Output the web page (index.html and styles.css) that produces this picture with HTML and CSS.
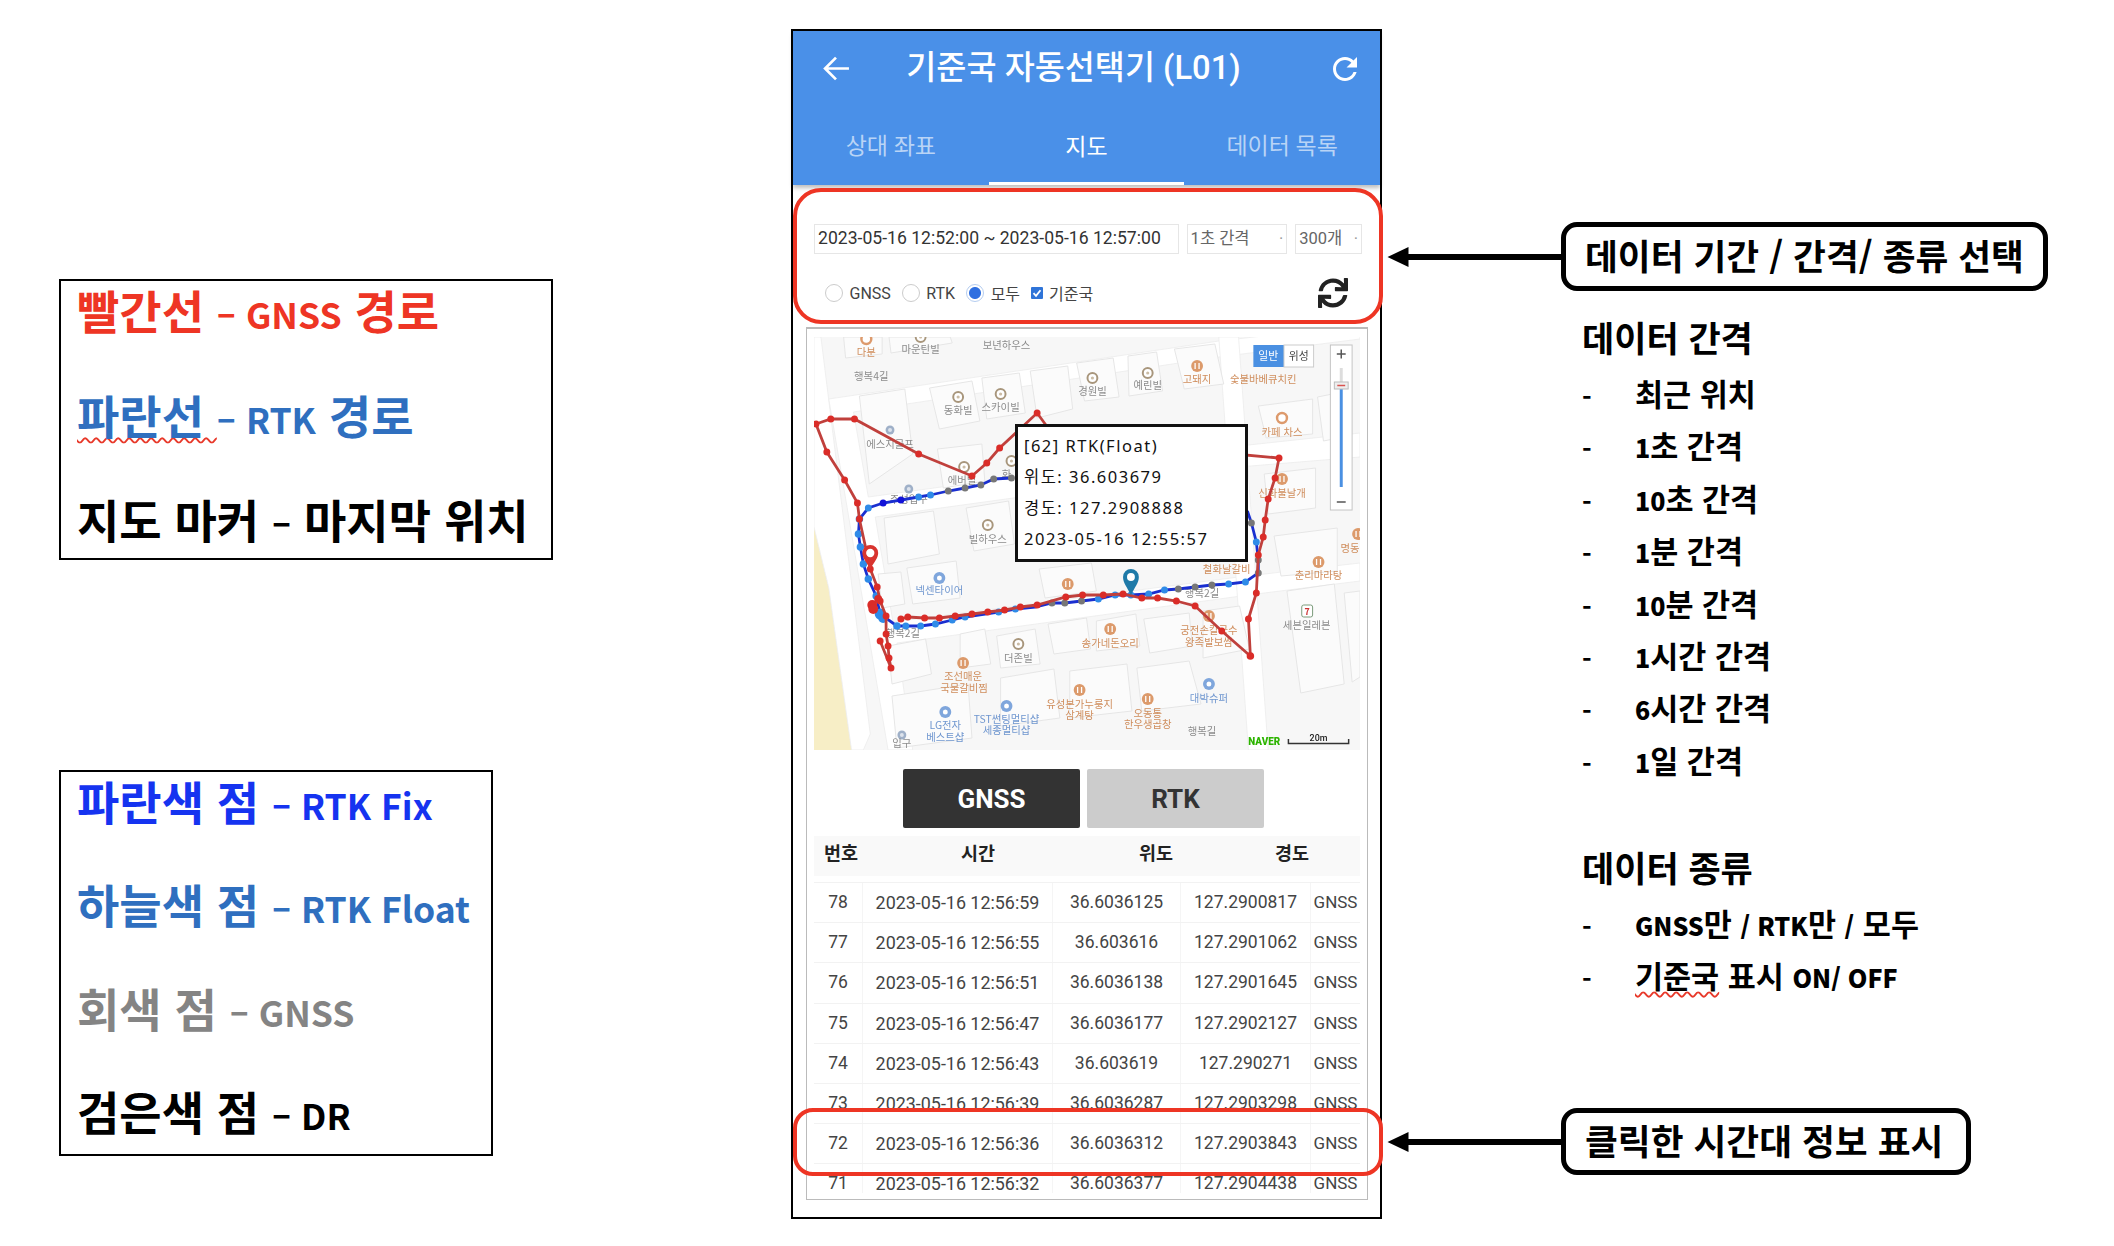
FILE: index.html
```html
<!DOCTYPE html>
<html lang="ko">
<head>
    <meta charset="UTF-8">
    <title>기준국 자동선택기</title>
    <link rel="stylesheet" href="styles.css">
</head>
<body>
<div class="slide">

    <!-- left legends -->
    <div class="legend legend-lines">
        <p class="red">빨간선 <small>– GNSS</small> 경로</p>
        <p class="blue"><span class="typo">파란선 </span><small>– RTK</small> 경로</p>
        <p>지도 마커 <small>–</small> 마지막 위치</p>
    </div>

    <div class="legend legend-dots">
        <p class="fix">파란색 점 <small>– RTK Fix</small></p>
        <p class="blue">하늘색 점 <small>– RTK Float</small></p>
        <p class="gray">회색 점 <small>– GNSS</small></p>
        <p>검은색 점 <small>– DR</small></p>
    </div>

    <!-- phone -->
    <div class="phone">
        <header class="app-head">
            <div class="title-row">
                <svg class="ico-back" viewBox="0 0 26 26"><path d="M25 13H2M12.500 2.500 2 13l10.500 10.500"/></svg>
                <h1>기준국 자동선택기 (L01)</h1>
                <svg class="ico-reload" viewBox="0 0 24 24"><path d="M17.650 6.350C16.200 4.900 14.210 4 12 4c-4.420 0-7.990 3.580-7.990 8s3.570 8 7.990 8c3.730 0 6.840-2.550 7.730-6h-2.080c-.82 2.330-3.040 4-5.650 4-3.310 0-6-2.690-6-6s2.690-6 6-6c1.660 0 3.140.69 4.220 1.780L13 11h7V4l-2.350 2.350z"/></svg>
            </div>
            <nav class="tabs">
                <a>상대 좌표</a>
                <a class="active">지도</a>
                <a>데이터 목록</a>
            </nav>
        </header>

        <section class="filters">
            <div class="filter-row">
                <div class="field date">2023-05-16 12:52:00 ~ 2023-05-16 12:57:00</div>
                <div class="field step">1초 간격<i>·</i></div>
                <div class="field count">300개<i>·</i></div>
            </div>
            <div class="option-row">
                <span class="radio"></span><label>GNSS</label>
                <span class="radio"></span><label>RTK</label>
                <span class="radio on"></span><label>모두</label>
                <span class="check"><svg viewBox="0 0 12 12"><path d="M2.500 6.200 5 8.800l4.500-5.600"/></svg></span><label>기준국</label>
                <svg class="ico-sync" viewBox="0 0 512 512"><path d="M440.650 12.570l4 82.770A247.160 247.160 0 0 0 255.830 8C134.730 8 33.910 94.920 12.290 209.820A12 12 0 0 0 24.090 224h49.050a12 12 0 0 0 11.670-9.260 175.910 175.910 0 0 1 317-56.940l-101.460-4.860a12 12 0 0 0-12.570 12v47.410a12 12 0 0 0 12 12H500a12 12 0 0 0 12-12V12a12 12 0 0 0-12-12h-47.370a12 12 0 0 0-11.980 12.570zM255.830 432a175.610 175.610 0 0 1-146-77.800l101.800 4.870a12 12 0 0 0 12.570-12v-47.400a12 12 0 0 0-12-12H12a12 12 0 0 0-12 12V500a12 12 0 0 0 12 12h47.350a12 12 0 0 0 12-12.600l-4.150-82.570A247.170 247.170 0 0 0 255.830 504c121.110 0 221.930-86.920 243.550-201.820a12 12 0 0 0-11.800-14.180h-49.050a12 12 0 0 0-11.670 9.260A175.860 175.860 0 0 1 255.830 432z"/></svg>
            </div>
        </section>

        <section class="panel">
            <div class="map">
                <svg class="map-svg" viewBox="0 0 553 413" preserveAspectRatio="none">
                    <defs>
                        <g id="poi-home"><circle r="5" fill="#fff" stroke="#a8967c" stroke-width="2"/><circle r="1.600" fill="#cbbca5"/></g>
                        <g id="poi-cafe"><circle r="5" fill="#fff" stroke="#dd9a6c" stroke-width="2.500"/></g>
                        <g id="poi-food"><circle r="6" fill="#dc9a6b"/><path d="M-2-3v6M2-3v6" stroke="#fff" stroke-width="1.300"/></g>
                        <g id="poi-shop"><circle r="6" fill="#7fa6dc"/><circle r="2.500" fill="#fff"/></g>
                        <g id="poi-gray"><circle r="4.500" fill="#9fb0c8"/><circle r="2" fill="#dde3ec"/></g>
                    </defs>

                    <!-- ground -->
                    <rect width="553" height="413" fill="#f7f7f7"/>
                    <polygon class="sand" points="0,190 15,251 38,413 0,413"/>
                    <polygon class="road" points="0,0 7,0 57,397 50,413 38,413 15,251 0,190"/>
                    <polygon class="road" points="15,62 410,4 553,-12 553,2 410,20 40,75 55,160 440,108 553,96 553,120 430,130 62,180 80,285 430,240 553,226 553,244 440,258 84,306 100,413 75,413"/>
                    <polygon class="road" points="410,0 430,0 460,413 440,413"/>

                    <!-- buildings -->
                    <g class="bld">
                        <polygon points="30,0 32,21 69,17 69,0"/>
                        <polygon points="76,0 78,16 140,6 138,0"/>
                        <polygon points="46,59 92,52 100,117 56,147"/>
                        <polygon points="117,51 160,44 168,84 127,92"/>
                        <polygon points="170,41 208,36 214,76 175,82"/>
                        <polygon points="219,34 257,29 262,72 226,81"/>
                        <polygon points="266,26 303,21 309,60 274,64"/>
                        <polygon points="318,19 347,15 353,54 319,59"/>
                        <polygon points="365,12 406,7 415,47 375,52"/>
                        <polygon points="125,112 170,107 173,144 131,151"/>
                        <polygon points="71,181 121,174 127,217 75,227"/>
                        <polygon points="154,171 197,164 203,207 162,214"/>
                        <polygon points="94,231 144,224 148,261 100,267"/>
                        <polygon points="65,237 88,235 92,267 69,271"/>
                        <polygon points="228,232 281,226 286,254 234,261"/>
                        <polygon points="75,309 113,302 119,337 79,347"/>
                        <polygon points="148,297 173,292 179,327 148,331"/>
                        <polygon points="185,299 224,292 229,327 189,331"/>
                        <polygon points="237,287 276,281 280,312 243,317"/>
                        <polygon points="286,284 326,277 330,309 286,314"/>
                        <polygon points="334,282 380,276 383,309 340,316"/>
                        <polygon points="394,274 431,269 441,312 394,321"/>
                        <polygon points="189,341 243,332 249,381 189,389"/>
                        <polygon points="259,334 317,327 322,374 259,381"/>
                        <polygon points="327,331 380,324 392,367 332,374"/>
                        <polygon points="79,359 156,347 160,401 84,411"/>
                        <polygon points="450,69 505,62 505,97 458,101"/>
                        <polygon points="456,137 508,131 508,171 460,177"/>
                        <polygon points="466,199 530,191 530,234 473,239"/>
                        <polygon points="479,254 527,247 537,347 493,356"/>
                        <polygon points="537,256 553,254 553,340 545,345"/>
                        <polygon points="510,60 530,56 536,100 516,104"/>
                    </g>

                    <!-- places -->
                    <use href="#poi-cafe" x="53" y="2"/>
                    <use href="#poi-home" x="108" y="0"/>
                    <use href="#poi-home" x="146" y="60"/>
                    <use href="#poi-home" x="189" y="57"/>
                    <use href="#poi-home" x="282" y="41"/>
                    <use href="#poi-home" x="338" y="36"/>
                    <use href="#poi-home" x="152" y="130"/>
                    <use href="#poi-home" x="200" y="124"/>
                    <use href="#poi-home" x="176" y="188"/>
                    <use href="#poi-home" x="207" y="307"/>
                    <use href="#poi-cafe" x="474" y="81"/>
                    <use href="#poi-food" x="388" y="29"/>
                    <use href="#poi-food" x="474" y="142"/>
                    <use href="#poi-food" x="511" y="225"/>
                    <use href="#poi-food" x="257" y="247"/>
                    <use href="#poi-food" x="300" y="292"/>
                    <use href="#poi-food" x="400" y="279"/>
                    <use href="#poi-food" x="151" y="326"/>
                    <use href="#poi-food" x="269" y="353"/>
                    <use href="#poi-food" x="338" y="362"/>
                    <use href="#poi-food" x="551" y="197"/>
                    <use href="#poi-gray" x="77" y="93"/>
                    <use href="#poi-gray" x="96" y="152"/>
                    <use href="#poi-gray" x="89" y="398"/>
                    <use href="#poi-shop" x="127" y="241"/>
                    <use href="#poi-shop" x="133" y="375"/>
                    <use href="#poi-shop" x="195" y="369"/>
                    <use href="#poi-shop" x="400" y="347"/>
                    <rect x="494" y="268" width="11" height="12" rx="2" fill="#fff" stroke="#7a9a7a"/>
                    <text class="t-seven" x="499.500" y="278">7</text>

                    <g class="t-gray">
                        <text x="108" y="16">마운틴빌</text>
                        <text x="195" y="12">보년하우스</text>
                        <text x="58" y="43">행복4길</text>
                        <text x="146" y="77">동화빌</text>
                        <text x="189" y="74">스카이빌</text>
                        <text x="282" y="58">경원빌</text>
                        <text x="338" y="52">예린빌</text>
                        <text x="150" y="147">에버빌</text>
                        <text x="195" y="141">화</text>
                        <text x="176" y="206">빌하우스</text>
                        <text x="393" y="260">행복2길</text>
                        <text x="499" y="292">세븐일레븐</text>
                        <text x="207" y="325">더존빌</text>
                        <text x="90" y="300">행복2길</text>
                        <text x="89" y="410">입구</text>
                        <text x="393" y="398">행복길</text>
                        <text x="77" y="111">에스지골프</text>
                        <text x="96" y="166">주성입구</text>
                    </g>
                    <g class="t-food">
                        <text x="53" y="19">다분</text>
                        <text x="388" y="46">고돼지</text>
                        <text x="455" y="46">숯불바베큐치킨</text>
                        <text x="474" y="99">카페 차스</text>
                        <text x="418" y="236">철화날갈비</text>
                        <text x="474" y="160">신화불날개</text>
                        <text x="511" y="242">춘리마라탕</text>
                        <text x="543" y="215">명동</text>
                        <text x="400" y="297">궁전손칼국수</text>
                        <text x="400" y="309">왕족발보쌈</text>
                        <text x="300" y="310">송가네돈오리</text>
                        <text x="151" y="343">조선매운</text>
                        <text x="152" y="355">국물갈비찜</text>
                        <text x="269" y="371">유성본가누룽지</text>
                        <text x="269" y="382">삼계탕</text>
                        <text x="338" y="380">오동통</text>
                        <text x="338" y="391">한우생곱창</text>
                    </g>
                    <g class="t-shop">
                        <text x="127" y="257">넥센타이어</text>
                        <text x="400" y="365">대박슈퍼</text>
                        <text x="133" y="392">LG전자</text>
                        <text x="133" y="404">베스트샵</text>
                        <text x="195" y="386">TST썬팅멀티샵</text>
                        <text x="195" y="397">세종멀티샵</text>
                    </g>

                    <!-- RTK path -->
                    <polyline class="line-blue" points="200,141 182,142 169,148 153,151 136,154 118,158 106,160 88,163 70,166 55,171 46,182 45,197 47,210 50,227 55,242 63,259 67,277 84,289 93,289 108,289 123,287 140,283 153,280 187,275 204,272 224,270 241,266 254,266 271,264 288,262 305,258 321,258 339,257 355,253 369,252 386,250 403,248 420,247 437,245 450,236 450,223 448,205 443,186 439,174"/>
                    <g class="dot-sky">
                        <circle cx="106" cy="160" r="3.500"/><circle cx="118" cy="158" r="3.500"/><circle cx="55" cy="171" r="3.500"/>
                        <circle cx="46" cy="182" r="3.800"/><circle cx="45" cy="197" r="3.800"/><circle cx="47" cy="210" r="3.800"/>
                        <circle cx="50" cy="227" r="3.800"/><circle cx="55" cy="242" r="3.800"/><circle cx="63" cy="259" r="3.800"/>
                        <circle cx="67" cy="277" r="5.500"/><circle cx="70" cy="281" r="5"/>
                        <circle cx="84" cy="289" r="3.800"/><circle cx="93" cy="289" r="3.500"/><circle cx="108" cy="289" r="3.500"/>
                        <circle cx="123" cy="287" r="3.500"/><circle cx="140" cy="283" r="3.500"/><circle cx="153" cy="280" r="3.500"/>
                        <circle cx="187" cy="275" r="3.500"/><circle cx="204" cy="272" r="3.500"/><circle cx="288" cy="262" r="3.500"/>
                        <circle cx="305" cy="258" r="3.500"/><circle cx="321" cy="258" r="3.500"/><circle cx="339" cy="257" r="3.500"/>
                        <circle cx="355" cy="253" r="3.500"/><circle cx="420" cy="247" r="3.500"/><circle cx="437" cy="245" r="3.500"/>
                        <circle cx="448" cy="205" r="3.500"/>
                    </g>
                    <g class="dot-fix"><circle cx="70" cy="166" r="3.500"/><circle cx="88" cy="163" r="3.500"/></g>
                    <g class="dot-gnss">
                        <circle cx="136" cy="154" r="3.500"/><circle cx="153" cy="151" r="3.500"/><circle cx="169" cy="148" r="3.500"/>
                        <circle cx="182" cy="142" r="3.500"/><circle cx="200" cy="141" r="3.500"/><circle cx="241" cy="266" r="3.500"/>
                        <circle cx="254" cy="266" r="3.500"/><circle cx="271" cy="264" r="3.500"/><circle cx="369" cy="252" r="3.500"/>
                        <circle cx="386" cy="250" r="3.500"/><circle cx="403" cy="248" r="3.500"/><circle cx="450" cy="236" r="3.500"/>
                        <circle cx="450" cy="223" r="3.500"/><circle cx="443" cy="186" r="3.500"/>
                    </g>

                    <!-- GNSS path -->
                    <polyline class="line-red" points="67,304 78,331 76,321 75,309 73,297 73,279 67,264 64,250 57,232 46,182 44,166 31,143 13,115 2,87 17,82 41,82 106,117 160,139 175,126 188,111 226,76 240,95 415,116 471,121 467,141 460,162 457,183 455,200 450,218 448,256 440,282 442,319 413,294 386,269 367,264 348,261 332,261 313,257 293,258 272,258 255,260 226,268 209,270 193,273 176,275 160,277 143,279 127,281 112,281 95,280 88,282"/>
                    <g class="dot-red">
                        <circle cx="67" cy="304" r="3.500"/><circle cx="78" cy="331" r="3.500"/><circle cx="76" cy="321" r="3.500"/>
                        <circle cx="75" cy="309" r="3.500"/><circle cx="73" cy="297" r="3.500"/><circle cx="73" cy="279" r="3.500"/>
                        <circle cx="67" cy="264" r="3.500"/><circle cx="64" cy="250" r="3.500"/><circle cx="57" cy="232" r="3.500"/>
                        <circle cx="46" cy="182" r="3.500"/><circle cx="44" cy="166" r="3.500"/><circle cx="31" cy="143" r="3.500"/>
                        <circle cx="13" cy="115" r="3.500"/><circle cx="2" cy="87" r="3.500"/><circle cx="17" cy="82" r="3.500"/>
                        <circle cx="41" cy="82" r="3.500"/><circle cx="106" cy="117" r="3.500"/><circle cx="160" cy="139" r="3.500"/>
                        <circle cx="175" cy="126" r="3.500"/><circle cx="188" cy="111" r="3.500"/><circle cx="226" cy="76" r="3.500"/>
                        <circle cx="415" cy="116" r="3.500"/><circle cx="471" cy="121" r="3.500"/><circle cx="467" cy="141" r="3.500"/>
                        <circle cx="460" cy="162" r="3.500"/><circle cx="457" cy="183" r="3.500"/><circle cx="455" cy="200" r="3.500"/>
                        <circle cx="450" cy="218" r="3.500"/><circle cx="448" cy="256" r="3.500"/><circle cx="440" cy="282" r="3.500"/>
                        <circle cx="442" cy="319" r="3.800"/><circle cx="413" cy="294" r="3.500"/><circle cx="386" cy="269" r="3.500"/>
                        <circle cx="367" cy="264" r="3.500"/><circle cx="348" cy="261" r="3.500"/><circle cx="332" cy="261" r="3.500"/>
                        <circle cx="313" cy="257" r="3.500"/><circle cx="293" cy="258" r="3.500"/><circle cx="272" cy="258" r="3.500"/>
                        <circle cx="255" cy="260" r="3.500"/><circle cx="226" cy="268" r="3.500"/><circle cx="209" cy="270" r="3.500"/>
                        <circle cx="193" cy="273" r="3.500"/><circle cx="176" cy="275" r="3.500"/><circle cx="160" cy="277" r="3.500"/>
                        <circle cx="143" cy="279" r="3.500"/><circle cx="127" cy="281" r="3.500"/><circle cx="112" cy="281" r="3.500"/>
                        <circle cx="95" cy="280" r="3.500"/><circle cx="88" cy="282" r="3.500"/>
                        <circle cx="59" cy="268" r="5"/><circle cx="60" cy="272" r="5"/><circle cx="65" cy="262" r="4"/>
                    </g>

                    <!-- last position markers -->
                    <path class="pin-red" d="M57 232c-4-7-8-11-8-16a8 8 0 0 1 16 0c0 5-4 9-8 16z"/>
                    <circle cx="57" cy="216" r="4.200" fill="#fff"/>
                    <path class="pin-blue" d="M321 258c-4-8-8-12-8-18a8 8 0 0 1 16 0c0 6-4 10-8 18z"/>
                    <circle cx="321" cy="240" r="4" fill="#fff"/>

                    <!-- map controls -->
                    <rect x="445" y="8" width="31" height="22" fill="#4a90e2"/>
                    <rect x="476" y="8" width="30" height="22" fill="#fff" stroke="#ccc"/>
                    <text class="t-ctl on" x="460" y="23">일반</text>
                    <text class="t-ctl" x="491" y="23">위성</text>
                    <rect x="523" y="8" width="22" height="165" fill="#fff" stroke="#c4c4c4"/>
                    <path d="M529.500 17h9M534 12.500v9M529.500 165h9" stroke="#555" stroke-width="1.500"/>
                    <rect x="532.500" y="31" width="3" height="14" fill="#ddd"/>
                    <rect x="532.500" y="45" width="3" height="105" fill="#4a90e2"/>
                    <rect x="527" y="45" width="14" height="7" fill="#eee" stroke="#bbb"/>
                    <path d="M530 48.500h8" stroke="#d9534f" stroke-width="1.500"/>

                    <text class="t-naver" x="456" y="408">NAVER</text>
                    <text class="t-scale" x="511" y="404">20m</text>
                    <path d="M480.500 402v4.500h61V402" fill="none" stroke="#333" stroke-width="1.500"/>
                </svg>

                <div class="map-tip">
                    <p>[62] RTK(Float)</p>
                    <p>위도: 36.603679</p>
                    <p>경도: 127.2908888</p>
                    <p>2023-05-16 12:55:57</p>
                </div>
            </div>

            <div class="switch">
                <button class="on">GNSS</button>
                <button>RTK</button>
            </div>

            <div class="t-head">
                <span>번호</span><span>시간</span><span>위도</span><span>경도</span>
            </div>
            <div class="t-body">
                <div class="t-row"><span>78</span><span class="t-date">2023-05-16 12:56:59</span><span>36.6036125</span><span>127.2900817</span><span>GNSS</span></div>
                <div class="t-row"><span>77</span><span class="t-date">2023-05-16 12:56:55</span><span>36.603616</span><span>127.2901062</span><span>GNSS</span></div>
                <div class="t-row"><span>76</span><span class="t-date">2023-05-16 12:56:51</span><span>36.6036138</span><span>127.2901645</span><span>GNSS</span></div>
                <div class="t-row"><span>75</span><span class="t-date">2023-05-16 12:56:47</span><span>36.6036177</span><span>127.2902127</span><span>GNSS</span></div>
                <div class="t-row"><span>74</span><span class="t-date">2023-05-16 12:56:43</span><span>36.603619</span><span>127.290271</span><span>GNSS</span></div>
                <div class="t-row"><span>73</span><span class="t-date">2023-05-16 12:56:39</span><span>36.6036287</span><span>127.2903298</span><span>GNSS</span></div>
                <div class="t-row"><span>72</span><span class="t-date">2023-05-16 12:56:36</span><span>36.6036312</span><span>127.2903843</span><span>GNSS</span></div>
                <div class="t-row"><span>71</span><span class="t-date">2023-05-16 12:56:32</span><span>36.6036377</span><span>127.2904438</span><span>GNSS</span></div>
            </div>
        </section>
    </div>

    <!-- red highlights over the phone -->
    <div class="mark mark-top"></div>
    <div class="mark mark-row"></div>

    <!-- callouts -->
    <svg class="arrow arrow-top" viewBox="0 0 174 20"><path d="M0 10 21 0v7h153v6H21v7z"/></svg>
    <div class="callout callout-top">데이터 기간 / 간격/ 종류 선택</div>

    <svg class="arrow arrow-row" viewBox="0 0 174 20"><path d="M0 10 21 0v7h153v6H21v7z"/></svg>
    <div class="callout callout-row">클릭한 시간대 정보 표시</div>

    <!-- right notes -->
    <div class="notes notes-step">
        <h2>데이터 간격</h2>
        <ul>
            <li>최근 위치</li>
            <li><b>1</b>초 간격</li>
            <li><b>10</b>초 간격</li>
            <li><b>1</b>분 간격</li>
            <li><b>10</b>분 간격</li>
            <li><b>1</b>시간 간격</li>
            <li><b>6</b>시간 간격</li>
            <li><b>1</b>일 간격</li>
        </ul>
    </div>

    <div class="notes notes-kind">
        <h2>데이터 종류</h2>
        <ul>
            <li><b>GNSS</b>만 <b>/ RTK</b>만 <b>/</b> 모두</li>
            <li><span class="typo">기준국</span> 표시 <b>ON/ OFF</b></li>
        </ul>
    </div>
</div>
</body>
</html>
```
FILE: styles.css
```css
* {
    box-sizing: border-box;
}

body {
    margin: 0;
    background: #fff;
    font-family: "Noto Sans CJK KR", sans-serif;
}

.slide {
    position: relative;
    width: 2114px;
    height: 1246px;
    overflow: hidden;
}

/* legends */
.legend {
    position: absolute;
    left: 59px;
    border: 2.5px solid #000;
    padding: 0 0 0 16px;
    font-weight: 700;
    font-size: 46px;
    color: #000;
    display: flex;
    flex-direction: column;
    justify-content: space-between;
}

.legend p {
    margin: 0;
    line-height: 56px;
    white-space: nowrap;
}

.legend small {
    font-size: 35.5px;
    line-height: 1;
}

.legend-lines {
    top: 279px;
    width: 494px;
    height: 281px;
    padding-bottom: 12px;
}

.legend-dots {
    top: 770px;
    width: 434px;
    height: 386px;
    padding-bottom: 16px;
}

.red { color: #ee3524; }
.blue { color: #2f6fbf; }
.fix { color: #1533f0; }
.gray { color: #848484; }

.typo {
    text-decoration: underline wavy #e8392a;
    text-decoration-thickness: 1.5px;
    text-decoration-skip-ink: none;
    text-underline-offset: 3px;
}

/* phone */
.phone {
    position: absolute;
    left: 791px;
    top: 29px;
    width: 591px;
    height: 1190px;
    border: 2px solid #000;
    background: #fff;
    font-family: Roboto, "Noto Sans CJK KR", sans-serif;
    color: #333;
}

.app-head {
    height: 154px;
    background: #4a90e8;
    box-shadow: 0 3px 4px rgba(0, 0, 0, 0.25);
    color: #fff;
    display: flex;
    flex-direction: column;
}

.title-row {
    height: 75px;
    padding: 0 17px 0 30px;
    display: flex;
    align-items: center;
    justify-content: space-between;
}

.title-row h1 {
    margin: 0 0 0 -30px;
    font-size: 32.7px;
    font-weight: 500;
    line-height: 1;
}

.ico-back {
    width: 27px;
    height: 27px;
    fill: none;
    stroke: #fff;
    stroke-width: 2.6;
}

.ico-reload {
    width: 36px;
    height: 36px;
    fill: #fff;
}

.tabs {
    flex: 1;
    display: flex;
}

.tabs a {
    flex: 1;
    text-align: center;
    font-size: 23px;
    line-height: 81px;
    height: 79px;
    color: #b9d4f6;
}

.tabs a.active {
    color: #fff;
    border-bottom: 3px solid #fff;
    line-height: 83px;
}

.filters {
    height: 142px;
    padding: 39px 18px 0 21px;
}

.filter-row {
    display: flex;
    gap: 8px;
    height: 30px;
}

.field {
    border: 1px solid #e6e6e6;
    font-size: 17.6px;
    line-height: 27px;
    padding-left: 3px;
    color: #333;
    position: relative;
    white-space: nowrap;
}

.field i {
    position: absolute;
    right: 3px;
    top: 0;
    font-style: normal;
    color: #999;
}

.date { width: 366px; }
.step { width: 101px; color: #666; font-size: 16.5px; }
.count { width: 67px; color: #666; font-size: 16.5px; }

.option-row {
    margin-top: 24px;
    height: 30px;
    padding-left: 11px;
    display: flex;
    align-items: center;
    font-size: 16px;
    color: #444;
}

.option-row label {
    margin: 0 11px 0 6.5px;
}

.radio {
    width: 18px;
    height: 18px;
    border: 1px solid #ccc;
    border-radius: 50%;
}

.radio.on {
    border-color: #b5cdf0;
    background: radial-gradient(circle, #2f6fe0 0 5.5px, #fff 6.5px);
}

.check {
    width: 12px;
    height: 12px;
    background: #2f74d8;
    border-radius: 1px;
    display: flex;
}

.check svg {
    fill: none;
    stroke: #fff;
    stroke-width: 1.8;
}

.check + label {
    margin-left: 6px;
}

.ico-sync {
    margin-left: auto;
    margin-right: 14px;
    width: 30px;
    height: 30px;
    fill: #222;
}

.panel {
    margin: 0 12px 0 13px;
    height: 873px;
    border: 1px solid #bbb;
    padding: 8px 7px;
    border-top-width: 2px;
}

.map {
    position: relative;
    height: 413px;
    width: 546px;
}

.map-svg {
    display: block;
    width: 546px;
    height: 413px;
    filter: blur(0.4px);
}

.sand { fill: #f7eec6; }
.road { fill: #fff; stroke: #ececec; stroke-width: 0.8; }

.bld polygon {
    fill: #fbfbfb;
    stroke: #e6e6e6;
    stroke-width: 1;
}

.map-svg text {
    font-family: "Noto Sans CJK KR", sans-serif;
    font-size: 10.5px;
    text-anchor: middle;
}

.t-gray text { fill: #8c8c8c; }
.t-food text { fill: #cf8d5c; }
.t-shop text { fill: #6f96cf; }

.map-svg .t-seven { font-size: 9px; font-weight: 700; fill: #c33; }
.map-svg .t-ctl { font-size: 11px; fill: #444; }
.map-svg .t-ctl.on { fill: #fff; }
.map-svg .t-naver { font-size: 10px; font-weight: 900; fill: #2db400; font-family: Roboto, sans-serif; }
.map-svg .t-scale { font-size: 9px; font-weight: 500; fill: #222; font-family: Roboto, sans-serif; }

.line-red, .line-blue {
    fill: none;
    stroke-width: 2.8;
}

.line-red { stroke: #c0403c; }
.line-blue { stroke: #1a2fd0; }

.dot-red { fill: #da2c28; }
.dot-sky { fill: #2f8be8; }
.dot-fix { fill: #1212d8; }
.dot-gnss { fill: #777; }

.pin-red { fill: #d8342f; }
.pin-blue { fill: #1f7aa8; }

.map-tip {
    position: absolute;
    left: 201px;
    top: 87px;
    width: 233px;
    height: 138px;
    background: #fff;
    border: 3px solid #111;
    padding: 3px 0 0 6px;
    font-family: "Noto Sans", "Noto Sans CJK KR", sans-serif;
    font-size: 16.5px;
    letter-spacing: 1.5px;
    color: #111;
}

.map-tip p {
    margin: 0;
    line-height: 31px;
    white-space: nowrap;
}

.switch {
    margin-top: 19px;
    display: flex;
    justify-content: center;
    gap: 7px;
    padding-right: 7px;
}

.switch button {
    width: 177px;
    height: 59px;
    border: none;
    border-radius: 2px;
    background: #ccc;
    color: #333;
    font-family: Roboto, sans-serif;
    font-size: 26px;
    font-weight: 700;
}

.switch button.on {
    background: #333;
    color: #fff;
}

.t-head {
    margin-top: 8px;
    height: 40px;
    background: #f9f9f9;
    display: grid;
    grid-template-columns: 54px 220px 136px 136px;
    font-weight: 700;
    font-size: 18.5px;
    line-height: 36px;
    text-align: center;
    color: #222;
}

.t-body {
    margin-top: 6px;
    height: 311px;
    overflow: hidden;
}

.t-row {
    display: grid;
    grid-template-columns: 48px 190px 128px 130px 50px;
    height: 40.2px;
    border-top: 1px solid #f2f2f2;
    font-size: 17.5px;
    line-height: 39px;
    text-align: center;
    color: #444;
    white-space: nowrap;
}

.t-row span + span {
    border-left: 1px solid #f5f5f5;
}

.t-row .t-date {
    font-size: 17.9px;
}

.t-row span:last-child {
    font-size: 17px;
}

/* overlays */
.mark {
    position: absolute;
    left: 793px;
    width: 590px;
    border: 4px solid #ee3524;
}

.mark-top {
    top: 188px;
    height: 136px;
    border-radius: 28px;
}

.mark-row {
    top: 1108px;
    height: 68px;
    border-radius: 20px;
}

.arrow {
    position: absolute;
    left: 1387px;
    width: 175px;
    height: 20px;
    fill: #000;
}

.arrow-top { top: 247px; }
.arrow-row { top: 1132px; }

.callout {
    position: absolute;
    left: 1561px;
    background: #fff;
    border: 5px solid #000;
    border-radius: 16px;
    padding: 0 0 4px 19px;
    font-size: 35.7px;
    font-weight: 700;
    color: #000;
    white-space: nowrap;
    display: flex;
    align-items: center;
}

.callout-top {
    top: 222px;
    width: 487px;
    height: 69px;
}

.callout-row {
    top: 1108px;
    width: 410px;
    height: 67px;
}

.notes {
    position: absolute;
    left: 1582px;
    color: #000;
    font-weight: 700;
}

.notes-step { top: 312px; }
.notes-kind { top: 842px; }

.notes h2 {
    margin: 0 0 5px;
    font-size: 35px;
    line-height: 50px;
    font-weight: 700;
}

.notes ul {
    margin: 0;
    padding: 0;
    list-style: none;
}

.notes li {
    position: relative;
    padding-left: 53px;
    font-size: 30.5px;
    line-height: 52.4px;
    white-space: nowrap;
}

.notes li b {
    font-size: 25px;
    line-height: 1;
}

.notes li::before {
    content: "-";
    position: absolute;
    left: 0;
    top: 3px;
    font-size: 26px;
}
```
